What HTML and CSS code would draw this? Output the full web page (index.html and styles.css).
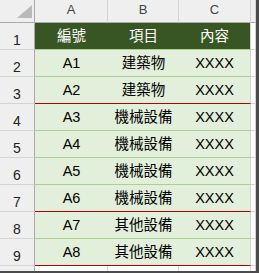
FILE: index.html
```html
<!DOCTYPE html>
<html lang="zh-Hant">
<head>
<meta charset="utf-8">
<title>Sheet</title>
<link rel="stylesheet" href="styles.css">
</head>
<body>
<div class="frame">
  <div class="sheet">
    <div class="corner"><svg width="34" height="22" viewBox="0 0 34 22"><polygon points="32,5 32,18 17,18" fill="#b9b9b9"/></svg></div>
    <div class="colhead">A</div>
    <div class="colhead">B</div>
    <div class="colhead">C</div>
    <div class="colhead last"></div>

    <div class="rowhead">1</div>
    <div class="cell title">編號</div>
    <div class="cell title">項目</div>
    <div class="cell title endcol">內容</div>
    <div class="blank"></div>

    <div class="rowhead">2</div>
    <div class="cell">A1</div>
    <div class="cell">建築物</div>
    <div class="cell endcol">XXXX</div>
    <div class="blank"></div>

    <div class="rowhead">3</div>
    <div class="cell red">A2</div>
    <div class="cell red">建築物</div>
    <div class="cell red endcol">XXXX</div>
    <div class="blank"></div>

    <div class="rowhead">4</div>
    <div class="cell">A3</div>
    <div class="cell">機械設備</div>
    <div class="cell endcol">XXXX</div>
    <div class="blank"></div>

    <div class="rowhead">5</div>
    <div class="cell">A4</div>
    <div class="cell">機械設備</div>
    <div class="cell endcol">XXXX</div>
    <div class="blank"></div>

    <div class="rowhead">6</div>
    <div class="cell">A5</div>
    <div class="cell">機械設備</div>
    <div class="cell endcol">XXXX</div>
    <div class="blank"></div>

    <div class="rowhead">7</div>
    <div class="cell red">A6</div>
    <div class="cell red">機械設備</div>
    <div class="cell red endcol">XXXX</div>
    <div class="blank"></div>

    <div class="rowhead">8</div>
    <div class="cell">A7</div>
    <div class="cell">其他設備</div>
    <div class="cell endcol">XXXX</div>
    <div class="blank"></div>

    <div class="rowhead">9</div>
    <div class="cell red">A8</div>
    <div class="cell red">其他設備</div>
    <div class="cell red endcol">XXXX</div>
    <div class="blank"></div>

    <div class="rowhead tail"></div>
    <div class="blank tail"></div>
    <div class="blank tail"></div>
    <div class="blank tail"></div>
    <div class="blank tail"></div>
  </div>
</div>
</body>
</html>
```
FILE: styles.css
```css
html, body {
  margin: 0;
  padding: 0;
  background: #ffffff;
}

.frame {
  width: 259px;
  height: 273px;
  box-sizing: border-box;
  border-right: 3px solid #4b4b4b;
  border-bottom: 2px solid #4b4b4b;
  overflow: hidden;
}

.sheet {
  display: grid;
  grid-template-columns: 35px 73px 71px 72px 5px;
  grid-template-rows: 23px repeat(9, 27px) 5px;
  font-family: "Liberation Sans", "Noto Sans CJK TC", sans-serif;
}

.sheet > div {
  box-sizing: border-box;
  display: flex;
  justify-content: center;
  overflow: hidden;
  white-space: nowrap;
}

.corner {
  background: #efefef;
  border-right: 1px solid #ababab;
  border-bottom: 1px solid #ababab;
}

.corner svg {
  display: block;
}

.colhead {
  background: #efefef;
  border-right: 1px solid #d4d4d4;
  border-bottom: 1px solid #ababab;
  align-items: center;
  padding-bottom: 4px;
  font-size: 13px;
  line-height: 15px;
  color: #444444;
}

.rowhead {
  background: #efefef;
  border-right: 1px solid #ababab;
  border-bottom: 1px solid #d4d4d4;
  align-items: flex-end;
  padding-bottom: 1px;
  font-size: 14px;
  line-height: 16px;
  color: #222222;
}

.cell {
  background: #e2efda;
  border-bottom: 1px solid #a9d08e;
  align-items: center;
  font-size: 14.5px;
  line-height: 18px;
  color: #000000;
}

.cell.title {
  background: #375623;
  color: #ffffff;
}

.cell.red {
  border-bottom-color: #b80000;
}

.cell.endcol {
  border-right: 1px solid #d4d4d4;
}

.blank {
  background: #ffffff;
  border-right: 1px solid #d4d4d4;
  border-bottom: 1px solid #d4d4d4;
}

.tail {
  border-bottom: none;
}
```
